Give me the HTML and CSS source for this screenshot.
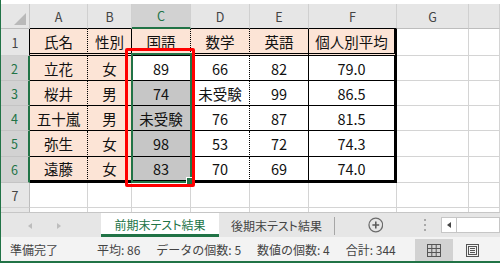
FILE: index.html
```html
<!DOCTYPE html>
<html lang="ja">
<head>
<meta charset="utf-8">
<link rel="stylesheet" href="styles.css">
</head>
<body>
<div class="app">
  <div class="sheet">
    <div class="grid">
      <div class="corner"><svg class="tri" width="12" height="12" viewBox="0 0 12 12"><polygon points="12,0 12,12 0,12" fill="#b9b9b9"/></svg></div>
      <div class="h tt">A</div>
      <div class="h tt">B</div>
      <div class="h tt hsel">C</div>
      <div class="h tt">D</div>
      <div class="h tt">E</div>
      <div class="h tt">F</div>
      <div class="h">G</div>
      <div class="h"></div>

      <div class="rh rt">1</div>
      <div class="c t r1 ca pk">氏名</div>
      <div class="c t r1 cb pk">性別</div>
      <div class="c t r1 cc pk">国語</div>
      <div class="c t r1 cd pk">数学</div>
      <div class="c t r1 ce pk">英語</div>
      <div class="c t r1 cf pk">個人別平均</div>
      <div class="c"></div>
      <div class="c"></div>

      <div class="rh rsel">2</div>
      <div class="c t ca pk">立花</div>
      <div class="c t cb pk">女</div>
      <div class="c t cc">89</div>
      <div class="c t cd">66</div>
      <div class="c t ce">82</div>
      <div class="c t cf">79.0</div>
      <div class="c"></div>
      <div class="c"></div>

      <div class="rh rsel">3</div>
      <div class="c t ca pk">桜井</div>
      <div class="c t cb pk">男</div>
      <div class="c t cc gy">74</div>
      <div class="c t cd">未受験</div>
      <div class="c t ce">99</div>
      <div class="c t cf">86.5</div>
      <div class="c"></div>
      <div class="c"></div>

      <div class="rh rsel">4</div>
      <div class="c t ca pk">五十嵐</div>
      <div class="c t cb pk">男</div>
      <div class="c t cc gy">未受験</div>
      <div class="c t cd">76</div>
      <div class="c t ce">87</div>
      <div class="c t cf">81.5</div>
      <div class="c"></div>
      <div class="c"></div>

      <div class="rh rsel">5</div>
      <div class="c t ca pk">弥生</div>
      <div class="c t cb pk">女</div>
      <div class="c t cc gy">98</div>
      <div class="c t cd">53</div>
      <div class="c t ce">72</div>
      <div class="c t cf">74.3</div>
      <div class="c"></div>
      <div class="c"></div>

      <div class="rh rsel">6</div>
      <div class="c t r6 ca pk">遠藤</div>
      <div class="c t r6 cb pk">女</div>
      <div class="c t r6 cc gy">83</div>
      <div class="c t r6 cd">70</div>
      <div class="c t r6 ce">69</div>
      <div class="c t r6 cf">74.0</div>
      <div class="c"></div>
      <div class="c"></div>

      <div class="rh">7</div>
      <div class="c"></div>
      <div class="c"></div>
      <div class="c"></div>
      <div class="c"></div>
      <div class="c"></div>
      <div class="c"></div>
      <div class="c"></div>
      <div class="c"></div>

      <div class="rh r8"></div>
      <div class="c r8"></div>
      <div class="c r8"></div>
      <div class="c r8"></div>
      <div class="c r8"></div>
      <div class="c r8"></div>
      <div class="c r8"></div>
      <div class="c r8"></div>
      <div class="c r8"></div>
    </div>
    <div class="selbox"><div class="handle"></div></div>
    <div class="redbox"></div>
  </div>

  <div class="tabs">
    <div class="nav">
      <svg width="100" height="24" viewBox="0 0 100 24">
        <polygon points="31,10 27,13 31,16" fill="#bdbdbd"/>
        <polygon points="56,10 60,13 56,16" fill="#bdbdbd"/>
      </svg>
    </div>
    <div class="tab active">前期末テスト結果</div>
    <div class="tab second">後期末テスト結果</div>
    <div class="sep"></div>
    <svg class="plus" width="16" height="16" viewBox="0 0 16 16">
      <circle cx="8" cy="8" r="7" fill="none" stroke="#6b6b6b" stroke-width="1.3"/>
      <path d="M4.5 8 H11.5 M8 4.5 V11.5" stroke="#5a5a5a" stroke-width="1.6"/>
    </svg>
    <div class="dots"><span></span><span></span><span></span></div>
    <div class="hs">
      <div class="sbtn"><span class="larr"></span></div>
    </div>
  </div>

  <div class="status">
    <div class="ready">準備完了</div>
    <div class="stats">
      <span>平均: 86</span>
      <span>データの個数: 5</span>
      <span>数値の個数: 4</span>
      <span>合計: 344</span>
    </div>
    <div class="views">
      <div class="vbtn on">
        <svg width="14" height="13" viewBox="0 0 14 13">
          <rect x="0.5" y="0.5" width="13" height="12" fill="none" stroke="#555" stroke-width="1"/>
          <path d="M4.8 0.5 V12.5 M9.2 0.5 V12.5 M0.5 4.5 H13.5 M0.5 8.5 H13.5" stroke="#555" stroke-width="1"/>
        </svg>
      </div>
      <div class="vbtn">
        <svg width="13" height="13" viewBox="0 0 13 13">
          <rect x="0.5" y="0.5" width="12" height="12" fill="none" stroke="#555" stroke-width="1"/>
          <rect x="2.5" y="2.5" width="8" height="8" fill="none" stroke="#555" stroke-width="1"/>
          <path d="M4 4.5 H9 M4 6.5 H9 M4 8.5 H9" stroke="#555" stroke-width="1"/>
        </svg>
      </div>
    </div>
  </div>
</div>
</body>
</html>
```

FILE: styles.css
```css
* { box-sizing: border-box; }
html, body { margin: 0; padding: 0; }
body {
  width: 500px;
  height: 263px;
  overflow: hidden;
  background: #fff;
  font-family: "Noto Sans CJK JP", "Noto Sans", sans-serif;
}
.app {
  width: 500px;
  height: 263px;
  border-left: 1px solid #217346;
  border-bottom: 2px solid #217346;
  display: flex;
  flex-direction: column;
  overflow: hidden;
}
.sheet {
  position: relative;
  height: 212px;
  padding-top: 4px;
  background: #fff;
  flex: none;
}
.grid {
  display: grid;
  grid-template-columns: 29px 58px 44px 59px 59px 59px 88px 72px 1fr;
  grid-template-rows: 25px 27px 25px 25px 25px 26px 26px 25px 4px;
}
.grid > div {
  display: flex;
  align-items: center;
  justify-content: center;
  white-space: nowrap;
  overflow: hidden;
}
.corner {
  background: #e6e6e6;
  border-right: 1px solid #c6c6c6;
  border-bottom: 1px solid #bdbdbd;
  position: relative;
}
.corner .tri { position: absolute; right: 3px; bottom: 3px; }
.h {
  background: #e6e6e6;
  color: #444;
  font-size: 12.5px;
  border-right: 1px solid #d0d0d0;
  border-bottom: 1px solid #bdbdbd;
}
.h.tt { border-bottom-color: #000; }
.h.hsel {
  background: #d2d2d2;
  color: #217346;
  border-bottom: 2px solid #217346;
}
.rh {
  background: #e6e6e6;
  color: #444;
  font-size: 12.5px;
  border-right: 1px solid #bdbdbd;
  border-bottom: 1px solid #d0d0d0;
}
.rh.rt { border-right-color: #000; }
.rh.rsel {
  background: #d2d2d2;
  color: #217346;
  border-right: 2px solid #217346;
  border-bottom-color: #c4c4c4;
}
.c {
  font-size: 14.5px;
  color: #111;
  border-right: 1px solid #d4d4d4;
  border-bottom: 1px solid #d4d4d4;
}
.r8 { border-bottom: none !important; }
.t { border-bottom: 1px solid #000; }
.t.r1 { border-bottom: 3px double #000; }
.t.r6 { border-bottom: 3px solid #000; }
.ca, .cc, .cd { border-right: 1px dotted #000; }
.cb { border-right: 1px solid #000; }
.ce { border-right: 1px solid #000; }
.cf { border-right: 3px solid #000; }
.pk { background: #fce4d6; }
.gy { background: #c6c6c6; }

.selbox {
  position: absolute;
  left: 130px;
  top: 53px;
  width: 61px;
  height: 130px;
  border: 2px solid #217346;
}
.handle {
  position: absolute;
  right: -3px;
  bottom: -3px;
  width: 7px;
  height: 7px;
  background: #217346;
  border-left: 1px solid #fff;
  border-top: 1px solid #fff;
}
.redbox {
  position: absolute;
  left: 124px;
  top: 48px;
  width: 70px;
  height: 139px;
  border: 3px solid #ff0000;
  border-radius: 2px;
}

.tabs {
  height: 25px;
  flex: none;
  background: #e6e6e6;
  border-top: 1px solid #c6c6c6;
  display: flex;
  align-items: stretch;
}
.nav { width: 100px; display: flex; align-items: center; }
.tab {
  display: flex;
  align-items: center;
  justify-content: center;
  font-size: 12px;
  font-feature-settings: "palt";
  white-space: nowrap;
}
.tab.active {
  width: 121px;
  background: #fff;
  color: #217346;
  border-bottom: 3px solid #217346;
  padding-top: 2px;
}
.tab.second {
  width: 118px;
  color: #444;
}
.sep {
  width: 1px;
  background: #a6a6a6;
  margin: 4px 0 2px;
}
.plus { align-self: center; margin-left: 33px; }
.dots {
  margin-left: 41px;
  width: 2px;
  display: flex;
  flex-direction: column;
  justify-content: center;
  gap: 3px;
}
.dots span { display: block; width: 2px; height: 2px; background: #a8a8a8; }
.hs {
  margin-left: 15px;
  align-self: center;
  width: 60px;
  height: 16px;
  background: #fff;
  border: 1px solid #c6c6c6;
  display: flex;
}
.sbtn {
  width: 15px;
  border-right: 1px solid #c6c6c6;
  display: flex;
  align-items: center;
  justify-content: center;
}
.larr {
  width: 0;
  height: 0;
  border-right: 4px solid #444;
  border-top: 3.5px solid transparent;
  border-bottom: 3.5px solid transparent;
}

.status {
  flex: 1;
  background: #f3f3f3;
  display: flex;
  align-items: stretch;
  font-size: 12px;
  color: #444;
  padding-left: 9px;
}
.ready { width: 87px; display: flex; align-items: center; }
.stats { display: flex; align-items: center; gap: 16px; white-space: nowrap; }
.views { margin-left: auto; display: flex; padding-right: 9px; }
.vbtn {
  width: 38px;
  display: flex;
  align-items: center;
  justify-content: center;
  margin-top: 2px;
}
.vbtn.on { background: #d2d2d2; }
```
